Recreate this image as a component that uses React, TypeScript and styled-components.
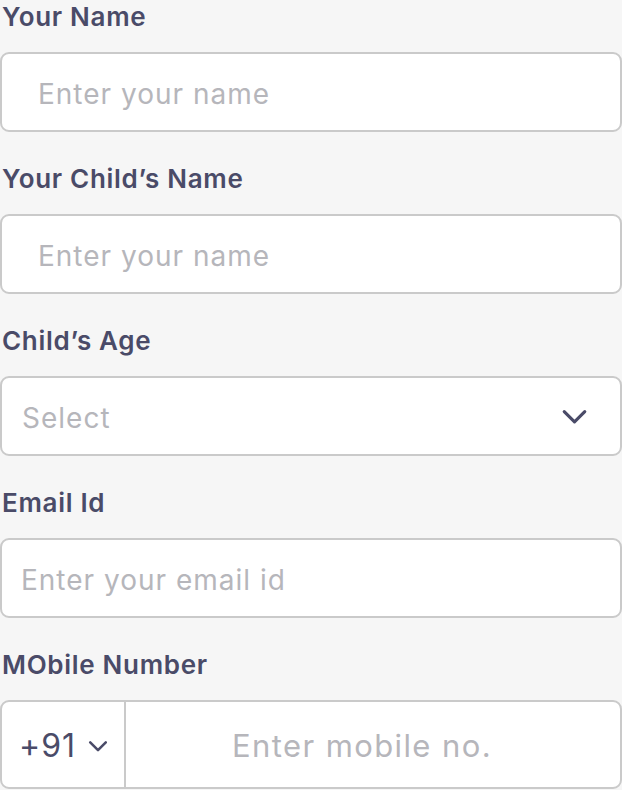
import React from 'react';
import styled, { createGlobalStyle } from 'styled-components';

const GlobalStyle = createGlobalStyle`
  html, body {
    margin: 0;
    padding: 0;
    background: #f6f6f6;
  }
  * {
    box-sizing: border-box;
  }
`;

const Form = styled.form`
  display: flex;
  flex-direction: column;
  gap: 30px;
  width: 622px;
  font-family: Inter, "Noto Sans", sans-serif;
`;

const Field = styled.div`
  display: flex;
  flex-direction: column;
  gap: 18px;
`;

const Label = styled.label`
  font-size: 26px;
  line-height: 34px;
  font-weight: 600;
  color: #4a4b68;
  padding-left: 2px;
  letter-spacing: 0.7px;
`;

const Box = styled.div<{ $tall?: boolean }>`
  display: flex;
  align-items: center;
  height: ${({ $tall }) => ($tall ? '89px' : '80px')};
  background: #fff;
  border: 2px solid #cacaca;
  border-radius: 9px;
  overflow: hidden;
`;

const TextInput = styled.input<{ $indent: number; $spacing?: number }>`
  flex: 1;
  min-width: 0;
  height: 100%;
  border: none;
  outline: none;
  background: transparent;
  padding: 3px 0 0 ${({ $indent }) => $indent}px;
  font-family: inherit;
  font-size: 28px;
  letter-spacing: ${({ $spacing }) => $spacing ?? 1}px;
  color: #4a4b68;
  &::placeholder {
    color: #b6b6bb;
  }
`;

const SelectText = styled.span`
  flex: 1;
  padding: 3px 0 0 20px;
  font-size: 28px;
  letter-spacing: 1px;
  color: #b6b6bb;
`;

const Chevron = styled.svg<{ $size: number; $right: number }>`
  width: ${({ $size }) => $size}px;
  height: ${({ $size }) => $size}px;
  margin-right: ${({ $right }) => $right}px;
  flex-shrink: 0;
`;

const Code = styled.div`
  display: flex;
  align-items: center;
  gap: 11px;
  height: 100%;
  width: 124px;
  padding: 2px 0 0 17px;
  border-right: 2px solid #cacaca;
  font-size: 32px;
  letter-spacing: 1px;
  color: #4a4b68;
`;

const MobileInput = styled(TextInput)`
  text-align: center;
  font-size: 31px;
  letter-spacing: 1.4px;
  padding: 2px 22px 0 0;
`;

function Arrow({ size, right, width = 2.4 }: { size: number; right: number; width?: number }) {
  return (
    <Chevron $size={size} $right={right} viewBox="0 0 24 24" fill="none">
      <path d="M3.5 8l8.5 8.5 8.5-8.5" stroke="#4a4b68" strokeWidth={width} strokeLinecap="round" strokeLinejoin="round" />
    </Chevron>
  );
}

export default function App() {
  return (
    <>
      <GlobalStyle />
      <Form onSubmit={(e) => e.preventDefault()}>
        <Field>
          <Label>Your Name</Label>
          <Box>
            <TextInput $indent={36} $spacing={1} placeholder="Enter your name" />
          </Box>
        </Field>

        <Field>
          <Label>Your Child’s Name</Label>
          <Box>
            <TextInput $indent={36} $spacing={1} placeholder="Enter your name" />
          </Box>
        </Field>

        <Field>
          <Label>Child’s Age</Label>
          <Box>
            <SelectText>Select</SelectText>
            <Arrow size={29} right={31} width={2.6} />
          </Box>
        </Field>

        <Field>
          <Label>Email Id</Label>
          <Box>
            <TextInput $indent={19} placeholder="Enter your email id" />
          </Box>
        </Field>

        <Field>
          <Label>MObile Number</Label>
          <Box $tall>
            <Code>
              +91
              <Arrow size={22} right={0} width={2.8} />
            </Code>
            <MobileInput $indent={0} placeholder="Enter mobile no." />
          </Box>
        </Field>
      </Form>
    </>
  );
}
